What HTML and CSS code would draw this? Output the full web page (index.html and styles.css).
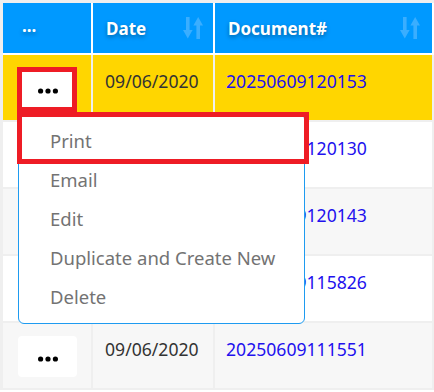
FILE: index.html
```html
<!DOCTYPE html>
<html lang="en">
<head>
    <meta charset="UTF-8">
    <meta name="viewport" content="width=device-width, initial-scale=1.0">
    <title>Documents</title>
    <link rel="stylesheet" href="styles.css">
</head>
<body>
    <div class="grid">
        <!-- Header -->
        <div class="row head">
            <div class="cell th-act">...</div>
            <div class="cell">
                <span>Date</span>
                <svg class="sort" width="20" height="22" viewBox="0 0 20 22"><rect x="3" y="0" width="3.6" height="15"/><polygon points="0,13 9.6,13 4.8,21.5"/><polygon points="10.4,8.5 20,8.5 15.2,0"/><rect x="13.4" y="7" width="3.6" height="15"/></svg>
            </div>
            <div class="cell">
                <span>Document#</span>
                <svg class="sort" width="20" height="22" viewBox="0 0 20 22"><rect x="3" y="0" width="3.6" height="15"/><polygon points="0,13 9.6,13 4.8,21.5"/><polygon points="10.4,8.5 20,8.5 15.2,0"/><rect x="13.4" y="7" width="3.6" height="15"/></svg>
            </div>
        </div>

        <!-- Rows -->
        <div class="row selected">
            <div class="cell td-act">
                <div class="act-wrap">
                    <button class="dots"><svg width="20" height="6" viewBox="0 0 20 6"><circle cx="2.6" cy="3" r="2.6"/><circle cx="10" cy="3" r="2.6"/><circle cx="17.4" cy="3" r="2.6"/></svg></button>
                    <ul class="menu">
                        <li>Print</li>
                        <li>Email</li>
                        <li>Edit</li>
                        <li>Duplicate and Create New</li>
                        <li>Delete</li>
                    </ul>
                    <div class="mark mark-btn"></div>
                    <div class="mark mark-print"></div>
                </div>
            </div>
            <div class="cell date">09/06/2020</div>
            <div class="cell doc"><a href="#">20250609120153</a></div>
        </div>
        <div class="row">
            <div class="cell td-act"><button class="dots"><svg width="20" height="6" viewBox="0 0 20 6"><circle cx="2.6" cy="3" r="2.6"/><circle cx="10" cy="3" r="2.6"/><circle cx="17.4" cy="3" r="2.6"/></svg></button></div>
            <div class="cell date">09/06/2020</div>
            <div class="cell doc"><a href="#">20250609120130</a></div>
        </div>
        <div class="row alt">
            <div class="cell td-act"><button class="dots"><svg width="20" height="6" viewBox="0 0 20 6"><circle cx="2.6" cy="3" r="2.6"/><circle cx="10" cy="3" r="2.6"/><circle cx="17.4" cy="3" r="2.6"/></svg></button></div>
            <div class="cell date">09/06/2020</div>
            <div class="cell doc"><a href="#">20250609120143</a></div>
        </div>
        <div class="row">
            <div class="cell td-act"><button class="dots"><svg width="20" height="6" viewBox="0 0 20 6"><circle cx="2.6" cy="3" r="2.6"/><circle cx="10" cy="3" r="2.6"/><circle cx="17.4" cy="3" r="2.6"/></svg></button></div>
            <div class="cell date">09/06/2020</div>
            <div class="cell doc"><a href="#">20250609115826</a></div>
        </div>
        <div class="row alt">
            <div class="cell td-act"><button class="dots"><svg width="20" height="6" viewBox="0 0 20 6"><circle cx="2.6" cy="3" r="2.6"/><circle cx="10" cy="3" r="2.6"/><circle cx="17.4" cy="3" r="2.6"/></svg></button></div>
            <div class="cell date">09/06/2020</div>
            <div class="cell doc"><a href="#">20250609111551</a></div>
        </div>
    </div>
</body>
</html>
```

FILE: styles.css
```css
body {
    margin: 0;
    font-family: "Noto Sans", sans-serif;
    background: #fff;
    overflow: hidden;
}
.grid {
    border-left: 3px solid #efefef;
    border-top: 3px solid #efefef;
}
.row {
    display: grid;
    grid-template-columns: 90px 122px 1fr;
    height: 67px;
}
.cell {
    box-sizing: border-box;
    border-right: 2px solid #efefef;
    border-bottom: 2px solid #efefef;
}
.row.alt {
    background: #f7f7f7;
}
.row.selected {
    background: #ffd600;
}

/* header */
.row.head {
    height: 52px;
    background: #0099ff;
}
.head .cell {
    display: flex;
    align-items: center;
    justify-content: space-between;
    padding: 0 10px 0 13px;
    border-color: #fff;
    color: #fff;
    font-weight: bold;
    font-size: 17px;
    text-shadow: 0 2px 4px rgba(0, 0, 0, 0.35);
}
.head .cell:last-child {
    padding-right: 12px;
}
.head .th-act {
    padding-left: 19px;
    padding-bottom: 6px;
}
.sort {
    fill: #3aaeff;
}

/* body cells */
.date, .doc {
    padding: 14px 0 0 12px;
    font-size: 17.6px;
    line-height: 24px;
    color: #333;
}
.doc {
    padding-left: 11px;
}
.doc a {
    color: #2211ee;
    text-decoration: none;
}
.td-act {
    padding: 13px 0 0 15px;
}
.act-wrap {
    position: relative;
}
.dots {
    display: flex;
    align-items: center;
    justify-content: center;
    width: 59px;
    height: 41px;
    padding: 4px 0 0 1px;
    border: none;
    border-radius: 4px;
    background: #fff;
    cursor: pointer;
}

/* dropdown */
.menu {
    position: absolute;
    left: 0;
    top: 45px;
    z-index: 2;
    width: 287px;
    margin: 0;
    padding: 7px 0;
    list-style: none;
    box-sizing: border-box;
    background: #fff;
    border: 1px solid #1e9bf0;
    border-radius: 6px;
}
.menu li {
    padding-left: 31px;
    font-size: 18.5px;
    line-height: 39px;
    color: #737373;
    white-space: nowrap;
}

/* red highlight boxes */
.mark {
    position: absolute;
    z-index: 3;
    box-sizing: border-box;
    border: 5px solid #ee1c25;
}
.mark-btn {
    left: -1px;
    top: -1px;
    width: 60px;
    height: 45px;
}
.mark-print {
    left: -1px;
    top: 44px;
    width: 292px;
    height: 52px;
}
```
